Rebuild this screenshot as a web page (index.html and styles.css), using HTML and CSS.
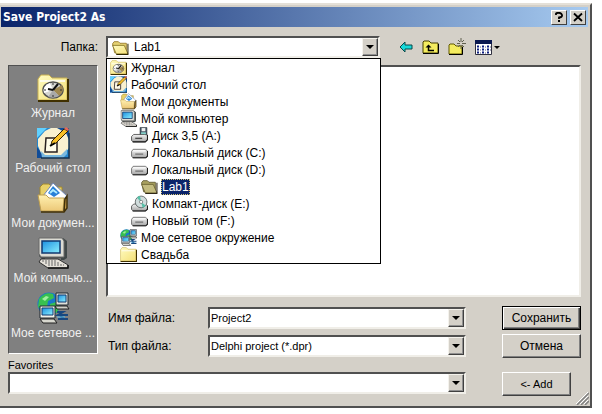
FILE: index.html
```html
<!DOCTYPE html>
<html lang="ru">
<head>
    <meta charset="UTF-8">
    <meta name="viewport" content="width=device-width, initial-scale=1.0">
    <title>Save Project2 As</title>
    <link rel="stylesheet" href="styles.css">
</head>
<body>
    <!-- icon set -->
    <svg class="sprite" aria-hidden="true">
        <defs>
            <linearGradient id="paper" x1="0" y1="0" x2="1" y2="1">
                <stop offset="0" stop-color="#fffbc0"/>
                <stop offset="1" stop-color="#f4e078"/>
            </linearGradient>
            <linearGradient id="sheet" x1="0" y1="0" x2="0" y2="1">
                <stop offset="0" stop-color="#fff0b0"/>
                <stop offset="1" stop-color="#ecc878"/>
            </linearGradient>
            <linearGradient id="screen" x1="0" y1="0" x2="1" y2="1">
                <stop offset="0" stop-color="#1c90e0"/>
                <stop offset="1" stop-color="#8cf0ff"/>
            </linearGradient>
            <linearGradient id="metal" x1="0" y1="0" x2="0" y2="1">
                <stop offset="0" stop-color="#f4f4f4"/>
                <stop offset="1" stop-color="#a4a4a4"/>
            </linearGradient>
        </defs>
        <symbol id="folder" viewBox="0 0 32 32">
            <path d="M1 28V7l3-4h8l3 3h15v22z" fill="url(#paper)" stroke="#c8b050"/>
            <path d="M1 29h30V7" fill="none" stroke="#403000" stroke-width="2"/>
            <path d="M3 9h25" stroke="#fff" stroke-width="1.5"/>
        </symbol>
        <symbol id="folder-open" viewBox="0 0 32 32">
            <path d="M5 26L1 9l3-4h8l3 3h12v18z" fill="#e4d070" stroke="#907020" stroke-width="1.5"/>
            <path d="M1 12h22l7 16H8z" fill="url(#paper)" stroke="#807020" stroke-width="1.5"/>
            <path d="M8 29h22V9" fill="none" stroke="#302800" stroke-width="2"/>
        </symbol>
        <symbol id="folder-dim" viewBox="0 0 32 32">
            <path d="M5 26L1 9l3-4h8l3 3h12v18z" fill="#a8a060" stroke="#585028" stroke-width="1.5"/>
            <path d="M1 12h22l7 16H8z" fill="#c4bc80" stroke="#686030" stroke-width="1.5"/>
            <path d="M8 29h22V9" fill="none" stroke="#302818" stroke-width="2"/>
        </symbol>
        <symbol id="history" viewBox="0 0 32 32">
            <use href="#folder"/>
            <ellipse cx="16" cy="18" rx="10" ry="8" fill="#d4d4d0" stroke="#505050" stroke-width="1.5"/>
            <path d="M16 18l-9 3a10 8 0 0 1 6-10z" fill="#fff"/>
            <path d="M16 18l9-5q3 6-3 11z" fill="#a08850"/>
            <path d="M16 18l6 6q-5 3-11 1z" fill="#a8a8a8"/>
            <path d="M16 18l5-6M16 18l-5-1" stroke="#101010" stroke-width="2"/>
            <path d="M16 11v2M16 23v2M7 18h2M23 18h2" stroke="#303030"/>
        </symbol>
        <symbol id="desktop" viewBox="0 0 32 32">
            <path d="M0 1h32v30H0z" fill="#2488d0"/>
            <path d="M16 1h16v11zM0 31V20l9 11z" fill="#104c98"/>
            <path d="M0 1h10L0 11z" fill="#60d0ff"/>
            <path d="M8 4l6-3h6l9 5 3 7v8l-5 6-5 3H10l-6-4-3-7v-7z" fill="#f8f0d0"/>
            <path d="M4 24l4 4h16l6-6v5l-4 4H5z" fill="#78b8e0"/>
            <path d="M9 11h11v14H8z" fill="#fffce8" stroke="#282020" stroke-width="1.5"/>
            <path d="M15 14L27 2l4 2-12 12-5 2z" fill="#f8c028" stroke="#302000"/>
            <path d="M27 2l2-2 3 2-1 2z" fill="#e86858"/>
            <path d="M13 19l5-3" stroke="#000" stroke-width="2"/>
            <path d="M32 6v25H4" fill="none" stroke="#103050" stroke-width="1.5"/>
        </symbol>
        <symbol id="documents" viewBox="0 0 32 32">
            <path d="M3 20V5l3-3h6l3 3h10v15z" fill="#e8d068" stroke="#a08830"/>
            <path d="M6 14L16 1l14 13-7 6H9z" fill="#fff" stroke="#7088b8"/>
            <path d="M11 11l5-7 7 7-6 4z" fill="#2880d8"/>
            <path d="M13 11l3-3 4 3" fill="none" stroke="#b0ecff" stroke-width="2"/>
            <path d="M1 13h8l3 3h15l-1 13H4z" fill="url(#sheet)" stroke="#c0a050"/>
            <path d="M4 30h23l3-4V14l-2 3-1 12" fill="#c89c48" stroke="#403008" stroke-width="1.5"/>
        </symbol>
        <symbol id="computer" viewBox="0 0 32 32">
            <path d="M2 1h24l4 3v17l-3 2H6l-4-4z" fill="#404848"/>
            <path d="M2 1h23l2 3v16H4l-2-3z" fill="#dcdcd4" stroke="#686868"/>
            <path d="M5 4h18v12H5z" fill="url(#screen)" stroke="#103870" stroke-width="1.5"/>
            <path d="M8 21h16v3H8z" fill="#707070"/>
            <path d="M4 22h17l10 6v3H11l-9-6z" fill="#e4e0d8" stroke="#303030"/>
            <path d="M5 24h15M8 26h15M11 28h16" stroke="#686868" stroke-width="1.2" stroke-dasharray="2 1"/>
            <path d="M11 31h20v-3" fill="none" stroke="#101010" stroke-width="1.5"/>
        </symbol>
        <symbol id="drive" viewBox="0 0 32 32">
            <path d="M1 14l3-4h23l4 3v10l-4 3H4l-3-3z" fill="url(#metal)" stroke="#606060" stroke-width="1.5"/>
            <path d="M3 26h25l3-3V13" fill="none" stroke="#202020" stroke-width="2"/>
            <path d="M4 13h23" stroke="#fff" stroke-width="2"/>
            <path d="M8 19h15" stroke="#606060" stroke-width="2"/>
        </symbol>
        <symbol id="floppy" viewBox="0 0 32 32">
            <path d="M17 1h13v16H17z" fill="#485868" stroke="#202830"/>
            <path d="M20 2h7v6h-7z" fill="#f0f0f0"/>
            <path d="M19 10h9v6h-9z" fill="#88d8d0"/>
            <path d="M1 18l4-4h20l6 1v9l-4 4H4l-3-3z" fill="url(#metal)" stroke="#404040" stroke-width="1.5"/>
            <path d="M3 28h24l4-4v-9M8 21h13" fill="none" stroke="#202020" stroke-width="2"/>
        </symbol>
        <symbol id="cdrom" viewBox="0 0 32 32">
            <path d="M1 21l4-4h22l4 3v7l-4 3H4l-3-3z" fill="url(#metal)" stroke="#404040" stroke-width="1.5"/>
            <path d="M3 30h24l4-3v-7" fill="none" stroke="#202020" stroke-width="2"/>
            <circle cx="19" cy="13" r="11" fill="#d0dcdc" stroke="#505858" stroke-width="1.5"/>
            <path d="M19 13L11 5a11 11 0 0 1 6-3zM19 13l9 7a11 11 0 0 1-6 4z" fill="#58c0a8"/>
            <circle cx="19" cy="13" r="3" fill="#fff" stroke="#404040"/>
        </symbol>
        <symbol id="network" viewBox="0 0 32 32">
            <circle cx="12" cy="12" r="11.500" fill="#1878c8"/>
            <path d="M2 7q6-8 14-5l1 4-6 3-1 6-5 3-4-3zM13 12l6-2 4 4-3 7-7-3z" fill="#38c050"/>
            <path d="M5 7l4-3 3 1-4 4z" fill="#a0f0a0"/>
            <path d="M19 1h12v12H19z" fill="#e0e0d8" stroke="#202830"/>
            <path d="M21 3h8v7h-8z" fill="url(#screen)" stroke="#103870"/>
            <path d="M18 14h12l2 3H20z" fill="#d0d0c8" stroke="#202020"/>
            <path d="M3 14h15v12H3z" fill="#f0f0e8" stroke="#202830"/>
            <path d="M5 16h11v7H5z" fill="url(#screen)" stroke="#103870"/>
            <path d="M3 27h14l3 4H6z" fill="#d8d8d0" stroke="#202020"/>
            <path d="M20 20h6l-5 3h10M21 27h10M23 24l5 3" fill="none" stroke="#184880" stroke-width="2"/>
            <path d="M20 25h8" stroke="#58c0f0"/>
        </symbol>
    </svg>

    <form class="dialog" onsubmit="return false">
        <header class="titlebar">
            <h1>Save Project2 As</h1>
            <button type="button" class="caption-btn" aria-label="Help">
                <svg width="10" height="10" viewBox="0 0 10 10"><path d="M2 3V1.500Q2.500 .8 5 .8T8 3 5 5.500V7" fill="none" stroke="#000" stroke-width="1.800"/><path d="M4 8h2v2H4z"/></svg>
            </button>
            <button type="button" class="caption-btn" aria-label="Close">
                <svg width="10" height="10" viewBox="0 0 10 10"><path d="M1 1.500l8 7.500M9 1.500L1 9" stroke="#000" stroke-width="1.800"/></svg>
            </button>
        </header>

        <div class="content">
            <div class="lookin">
                <label for="folder-select">Папка:</label>
                <div class="lookin-box">
                    <div class="combo">
                        <svg class="icon"><use href="#folder-open"/></svg>
                        <select id="folder-select">
                            <option>Lab1</option>
                        </select>
                        <span class="arrow"></span>
                    </div>
                    <ul class="dropdown" role="listbox" aria-label="Папка">
                        <li role="option"><svg class="icon"><use href="#history"/></svg><span>Журнал</span></li>
                        <li role="option"><svg class="icon"><use href="#desktop"/></svg><span>Рабочий стол</span></li>
                        <li role="option" class="level-1"><svg class="icon"><use href="#documents"/></svg><span>Мои документы</span></li>
                        <li role="option" class="level-1"><svg class="icon"><use href="#computer"/></svg><span>Мой компьютер</span></li>
                        <li role="option" class="level-2"><svg class="icon"><use href="#floppy"/></svg><span>Диск 3,5 (A:)</span></li>
                        <li role="option" class="level-2"><svg class="icon"><use href="#drive"/></svg><span>Локальный диск (C:)</span></li>
                        <li role="option" class="level-2"><svg class="icon"><use href="#drive"/></svg><span>Локальный диск (D:)</span></li>
                        <li role="option" class="level-3 selected" aria-selected="true"><svg class="icon"><use href="#folder-dim"/></svg><span>Lab1</span></li>
                        <li role="option" class="level-2"><svg class="icon"><use href="#cdrom"/></svg><span>Компакт-диск (E:)</span></li>
                        <li role="option" class="level-2"><svg class="icon"><use href="#drive"/></svg><span>Новый том (F:)</span></li>
                        <li role="option" class="level-1"><svg class="icon"><use href="#network"/></svg><span>Мое сетевое окружение</span></li>
                        <li role="option" class="level-1"><svg class="icon"><use href="#folder"/></svg><span>Свадьба</span></li>
                    </ul>
                </div>
                <div class="toolbar">
                    <button type="button" aria-label="Назад">
                        <svg width="14" height="16" viewBox="0 0 14 16"><path d="M1 8l5-5v3h7v4H6v3z" fill="#18d8d8" stroke="#084848"/></svg>
                    </button>
                    <button type="button" aria-label="Вверх">
                        <svg width="17" height="16" viewBox="0 0 17 16"><path d="M1 14V3l1-1h5l2 2h7v10z" fill="#f4ec60" stroke="#484000"/><path d="M1 14.500h15.500V5" fill="none" stroke="#000"/><path d="M12 11.500H6.500V7" fill="none" stroke="#000" stroke-width="1.500"/><path d="M3.500 8.500l3-3 3 3z"/></svg>
                    </button>
                    <button type="button" aria-label="Новая папка">
                        <svg width="18" height="18" viewBox="0 0 18 18"><path d="M1 16V7l1-1h4l2 2h6v8z" fill="#f4ec60" stroke="#605800"/><path d="M1 16.500h13.500V9" fill="none" stroke="#000"/><path d="M13 0v4M13 7v4M9 5.500h3M14 5.500h4M10 2l2 2M16 2l-2 2M10 9l2-2M16 9l-2-2" stroke="#606050"/></svg>
                    </button>
                    <button type="button" aria-label="Вид">
                        <svg width="25" height="16" viewBox="0 0 25 16"><path d="M.5 1.500h16v14H.5z" fill="#fff" stroke="#303040"/><path d="M0 1h17v4H0z" fill="#0a1850"/><path d="M2 7.500h2M7 7.500h2M12 7.500h2M2 10.500h2M7 10.500h2M12 10.500h2M2 13.500h2M7 13.500h2M12 13.500h2" stroke="#102080" stroke-width="2"/><path d="M5 8h1M10 8h1M15 8h1M5 11h1M10 11h1M15 11h1M5 14h1M10 14h1" stroke="#606080"/><path d="M19 7h6l-3 3z"/></svg>
                    </button>
                </div>
            </div>

            <div class="main">
                <nav class="places">
                    <button type="button"><svg><use href="#history"/></svg>Журнал</button>
                    <button type="button"><svg><use href="#desktop"/></svg>Рабочий стол</button>
                    <button type="button"><svg><use href="#documents"/></svg>Мои докумен...</button>
                    <button type="button"><svg><use href="#computer"/></svg>Мой компью...</button>
                    <button type="button"><svg><use href="#network"/></svg>Мое сетевое ...</button>
                </nav>
                <div class="right">
                    <div class="file-list"></div>
                    <div class="fields">
                        <label for="file-name">Имя файла:</label>
                        <div class="combo">
                            <input type="text" id="file-name" value="Project2">
                            <span class="arrow"></span>
                        </div>
                        <button type="submit" class="btn btn-default">Сохранить</button>
                        <label for="file-type">Тип файла:</label>
                        <div class="combo">
                            <select id="file-type">
                                <option>Delphi project (*.dpr)</option>
                            </select>
                            <span class="arrow"></span>
                        </div>
                        <button type="button" class="btn">Отмена</button>
                    </div>
                </div>
            </div>

            <div class="favorites">
                <label for="favorites">Favorites</label>
                <div class="combo">
                    <select id="favorites">
                        <option></option>
                    </select>
                    <span class="arrow"></span>
                </div>
                <button type="button" class="btn btn-add">&lt;- Add</button>
            </div>
        </div>

        <svg class="grip" width="13" height="13" viewBox="0 0 13 13" aria-hidden="true">
            <path d="M1 13L13 1M5 13l8-8M9 13l4-4" stroke="#808080" stroke-width="1.500"/>
            <path d="M0 12L12 0M4 12l8-8M8 12l4-4" stroke="#fff"/>
        </svg>
    </form>
</body>
</html>
```
FILE: styles.css
```css
* {
    box-sizing: border-box;
}
body {
    margin: 0;
    padding: 3px 10px 6px 0;
    background-color: #fff;
    font-family: "Liberation Sans", Arial, sans-serif;
    font-size: 12px;
    line-height: 16px;
    color: #000;
}
button, input, select {
    font: inherit;
    color: inherit;
}
.sprite {
    position: absolute;
    width: 0;
    height: 0;
}
.dialog {
    position: relative;
    padding: 2px 2px 2px 1px;
    background-color: #d4d0c8;
    border: 2px solid;
    border-color: #e4e0d8 #505050 #505050 #d4d0c8;
    border-left: none;
}

/* title */
.titlebar {
    display: flex;
    align-items: center;
    gap: 3px;
    height: 20px;
    padding: 0 2px;
    background: linear-gradient(to right, #0a246a, #a6caf0);
}
.titlebar h1 {
    flex: 1;
    margin: 0;
    font-family: "DejaVu Sans Condensed", "DejaVu Sans", sans-serif;
    font-size: 12px;
    font-weight: bold;
    color: #fff;
}
.caption-btn {
    display: flex;
    align-items: center;
    justify-content: center;
    width: 16px;
    height: 15px;
    padding: 0;
    background-color: #d4d0c8;
    border: 1px solid;
    border-color: #fff #404040 #404040 #fff;
}

.content {
    padding: 9px 7px 8px;
}

/* combo boxes */
.combo {
    display: flex;
    align-items: center;
    height: 22px;
    background-color: #fff;
    border: 2px solid;
    border-color: #505050 #f0eee8 #f0eee8 #505050;
}
.combo select, .combo input {
    flex: 1;
    min-width: 0;
    height: 18px;
    padding: 0 1px;
    border: none;
    outline: none;
    background: none;
    appearance: none;
    font-size: 11px;
}
.arrow {
    display: flex;
    align-items: center;
    justify-content: center;
    width: 16px;
    height: 18px;
    background-color: #d4d0c8;
    border: 1px solid;
    border-color: #f4f2ec #404040 #404040 #f4f2ec;
    box-shadow: inset -1px -1px #909090;
    pointer-events: none;
}
.arrow::after {
    content: "";
    border: 4px solid transparent;
    border-top-color: #000;
    border-bottom: none;
}
.icon {
    flex: none;
    width: 17px;
    height: 17px;
}

/* look in */
.lookin {
    display: grid;
    grid-template-columns: 90px minmax(0, 274px) auto;
    align-items: center;
    margin-bottom: 7px;
}
.lookin label {
    text-align: right;
}
.lookin-box {
    position: relative;
    margin-left: 8px;
    margin-right: -8px;
}
.lookin-box .combo {
    padding-left: 4px;
}
.lookin-box select {
    margin-left: 4px;
    font-size: 12px;
}
.dropdown {
    position: absolute;
    top: 22px;
    left: 0;
    right: -1px;
    z-index: 1;
    margin: 0;
    padding: 0;
    list-style: none;
    background-color: #fff;
    border: 1px solid #000;
}
.dropdown li {
    display: flex;
    align-items: center;
    gap: 3px;
    height: 17px;
    padding-left: 3px;
    white-space: nowrap;
}
.dropdown span {
    padding: 0 1px;
}
.dropdown .level-1 {
    padding-left: 13px;
}
.dropdown .level-2 {
    padding-left: 24px;
}
.dropdown .level-3 {
    padding-left: 34px;
}
.dropdown .selected span {
    color: #fff;
    background-color: #0a246a;
    outline: 1px dotted #d8c878;
    outline-offset: -1px;
}
.toolbar {
    display: flex;
    align-items: center;
    gap: 9px;
    margin-left: 27px;
}
.toolbar button {
    display: flex;
    padding: 0;
    background: none;
    border: none;
}

/* places bar + list */
.main {
    display: flex;
    align-items: flex-start;
    gap: 8px;
}
.places {
    flex: none;
    width: 90px;
    padding: 6px 0;
    background-color: #808080;
    border: 1px solid;
    border-color: #505050 #fff #fff #505050;
}
.places button {
    display: flex;
    flex-direction: column;
    align-items: center;
    width: 100%;
    height: 55px;
    padding: 0;
    background: none;
    border: none;
    color: #f0f0f0;
    line-height: 18px;
    white-space: nowrap;
}
.places svg {
    flex: none;
    width: 34px;
    height: 32px;
}
.right {
    flex: 1;
    min-width: 0;
}
.file-list {
    min-height: 232px;
    background-color: #fff;
    border: 2px solid;
    border-color: #505050 #f0eee8 #f0eee8 #505050;
}
.fields {
    display: grid;
    grid-template-columns: 102px minmax(0, 1fr) 79px;
    align-items: center;
    row-gap: 4px;
    margin-top: 9px;
}
.fields label {
    padding-left: 2px;
}
.btn {
    height: 24px;
    padding: 0;
    background-color: #d4d0c8;
    border: 1px solid;
    border-color: #fff #404040 #404040 #fff;
    box-shadow: inset -1px -1px #808080;
}
.btn-default {
    border-color: #000;
    box-shadow: inset 1px 1px #fff, inset -1px -1px #404040, inset -2px -2px #808080;
}
.fields .combo, .favorites .combo {
    margin-right: 36px;
}

/* favorites */
.favorites {
    display: grid;
    grid-template-columns: minmax(0, 1fr) 79px;
    margin-top: 1px;
}
.favorites label {
    grid-column: 1 / -1;
    font-size: 11px;
    line-height: 13px;
}
.btn-add {
    margin-right: 10px;
    font-size: 11px;
}
.grip {
    position: absolute;
    right: 1px;
    bottom: 1px;
}
```
